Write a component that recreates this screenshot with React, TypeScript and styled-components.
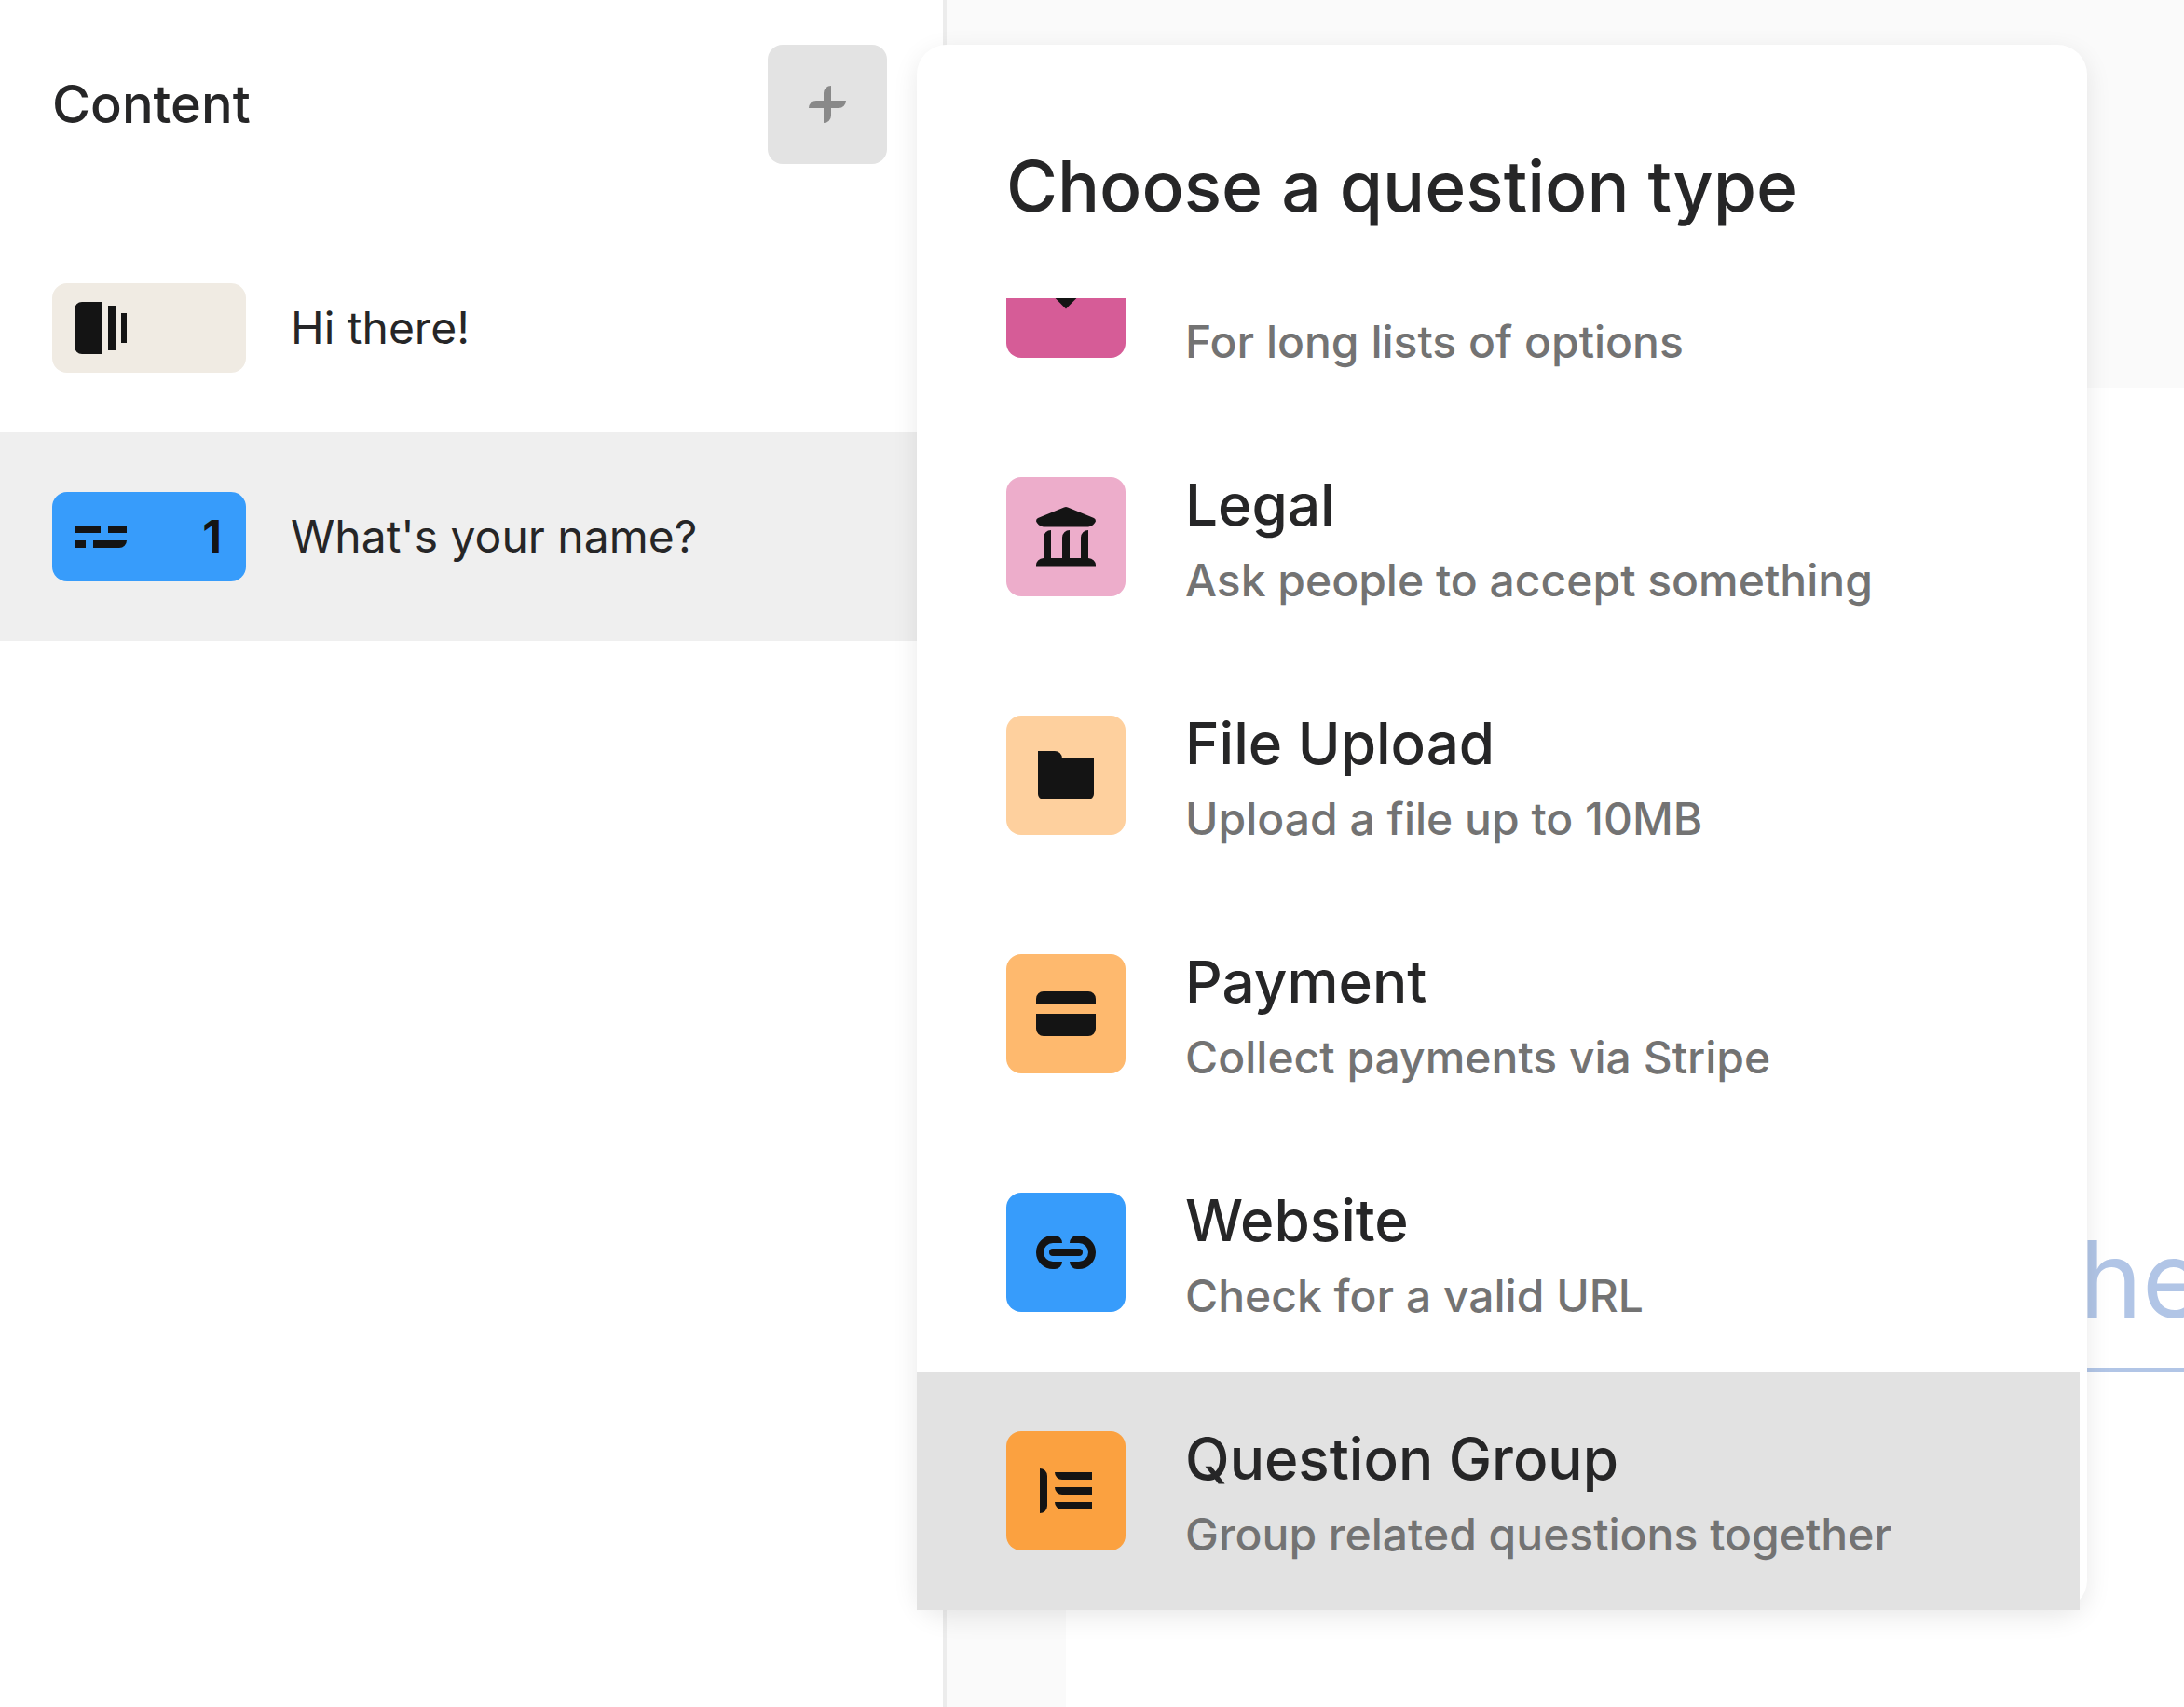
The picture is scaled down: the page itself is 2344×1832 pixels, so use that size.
import React, { useLayoutEffect, useRef } from "react";
import styled, { createGlobalStyle } from "styled-components";

const GlobalStyle = createGlobalStyle`
  *, *::before, *::after { box-sizing: border-box; }
  body {
    margin: 0;
    background: #ffffff;
    color: #262627;
    font-family: Inter, "Liberation Sans", sans-serif;
  }
  button, input { font: inherit; color: inherit; }
  h1, h2, p, ul { margin: 0; padding: 0; }
  ul { list-style: none; }
`;

const Page = styled.div`
  position: relative;
  display: flex;
  min-height: 100vh;
  overflow: hidden;
`;

const Sidebar = styled.aside`
  flex: none;
  width: 1016px;
  border-right: 4px solid #ececec;
  background: #ffffff;
`;

const SidebarHeader = styled.header`
  display: flex;
  align-items: center;
  justify-content: space-between;
  padding: 48px 60px 64px 56px;
`;

const SidebarTitle = styled.h2`
  font-size: 56px;
  line-height: 80px;
  font-weight: 500;
`;

const AddButton = styled.button`
  display: flex;
  align-items: center;
  justify-content: center;
  width: 128px;
  height: 128px;
  padding: 0;
  border: 0;
  border-radius: 16px;
  background: #e3e3e3;
  cursor: pointer;
`;

const Block = styled.button<{ $selected?: boolean }>`
  display: flex;
  align-items: center;
  gap: 48px;
  width: 100%;
  height: 224px;
  padding: 0 56px;
  border: 0;
  background: ${(p) => (p.$selected ? "#efefef" : "transparent")};
  text-align: left;
  font-size: 48px;
  line-height: 72px;
  cursor: pointer;
`;

const Chip = styled.span<{ $color: string }>`
  display: flex;
  align-items: center;
  justify-content: space-between;
  flex: none;
  width: 208px;
  height: 96px;
  padding: 0 26px 0 24px;
  border-radius: 16px;
  background: ${(p) => p.$color};
  color: #141414;
  font-weight: 700;
`;

const Workspace = styled.main`
  display: flex;
  flex: 1;
  min-width: 0;
  padding: 416px 0 0 128px;
  background: #fafafa;
`;

const Canvas = styled.section`
  flex: 1;
  min-width: 0;
  padding: 880px 0 0 92px;
  overflow: hidden;
  background: #ffffff;
`;

const AnswerInput = styled.input`
  display: block;
  width: 100%;
  height: 176px;
  padding: 0 0 20px 0;
  border: 0;
  border-bottom: 4px solid #b1c5e6;
  border-radius: 0;
  outline: 0;
  background: transparent;
  font-size: 114px;
  &::placeholder { color: #b1c5e6; opacity: 1; }
`;

const Menu = styled.div`
  position: absolute;
  top: 48px;
  left: 984px;
  width: 1256px;
  padding-top: 96px;
  border-radius: 32px;
  background: #ffffff;
  box-shadow: 0 8px 28px rgba(0, 0, 0, 0.09);
`;

const MenuTitle = styled.h1`
  padding: 0 96px 64px;
  font-size: 75px;
  line-height: 112px;
  font-weight: 500;
`;

const OptionList = styled.ul`
  height: 1408px;
  margin-right: 8px;
  overflow-y: auto;
  scrollbar-width: none;
`;

const Option = styled.button<{ $active?: boolean }>`
  display: flex;
  align-items: center;
  gap: 64px;
  width: 100%;
  height: 256px;
  padding: 0 96px;
  border: 0;
  background: ${(p) => (p.$active ? "#e2e2e2" : "transparent")};
  text-align: left;
  cursor: pointer;
`;

const Tile = styled.span<{ $color: string }>`
  display: flex;
  flex: none;
  align-items: center;
  justify-content: center;
  width: 128px;
  height: 128px;
  border-radius: 16px;
  background: ${(p) => p.$color};
`;

const OptionText = styled.span`
  display: flex;
  flex-direction: column;
  padding-top: 4px;
`;

const OptionName = styled.span<{ $scrolledPast?: boolean }>`
  visibility: ${(p) => (p.$scrolledPast ? "hidden" : "visible")};
  font-size: 62px;
  line-height: 90px;
  font-weight: 500;
`;

const OptionHint = styled.span`
  color: #737373;
  font-size: 48px;
  line-height: 72px;
  font-weight: 500;
`;

const Glyph = styled.svg`
  display: block;
  flex: none;
  fill: #141414;
`;

const PlusIcon = () => (
  <Glyph width="40" height="40" viewBox="0 0 20 20" aria-hidden="true">
    <path
      fill="#898989"
      d="M8 4a4 4 0 0 1 4-4v8h8a4 4 0 0 1-4 4h-4v4a4 4 0 0 1-4 4v-8H0a4 4 0 0 1 4-4h4z"
    />
  </Glyph>
);

const WelcomeIcon = () => (
  <Glyph width="56" height="56" viewBox="0 0 28 28" aria-hidden="true">
    <path d="M4 0h11v28H4a4 4 0 0 1-4-4V4a4 4 0 0 1 4-4zM18 2h4v24h-4zM25 6h3v16h-3z" />
  </Glyph>
);

const ShortTextIcon = () => (
  <Glyph width="56" height="24" viewBox="0 0 28 12" aria-hidden="true">
    <path d="M0 0h14v4H0zM18 0h10v4H18zM0 8h6v4H0zM10 8h18a4 4 0 0 1-4 4H10z" />
  </Glyph>
);

const TileGlyph = ({ d }: { d: string }) => (
  <Glyph width="64" height="64" viewBox="0 0 32 32" aria-hidden="true">
    <path d={d} />
  </Glyph>
);

const icons = {
  dropdown: "M5.300 11h21.400L16 21.700z",
  legal:
    "M15 .2a3 3 0 0 1 2 0L31 6q1 .5 1 1.600q-.8 2.400-4 3.200H4Q.8 10 0 7.600q0-1.100 1-1.600zM4 16.500a4 4 0 0 1 4-4v15h6v-11a4 4 0 0 1 4-4v15h6v-11a4 4 0 0 1 4-4v15a4 4 0 0 1 4 4.300H0a4 4 0 0 1 4-4.300z",
  folder: "M1 3h9a4 4 0 0 1 4 4h17v19a3 3 0 0 1-3 3H4a3 3 0 0 1-3-3z",
  card: "M4 4h24a4 4 0 0 1 4 4v3H0V8a4 4 0 0 1 4-4zM0 16h32v8a4 4 0 0 1-4 4H4a4 4 0 0 1-4-4z",
  link: "M9 7a9 9 0 0 0 0 18h1a4 4 0 0 0 4-4H9a5 5 0 0 1 0-10h5a4 4 0 0 0-4-4zM23 7a9 9 0 0 1 0 18h-1a4 4 0 0 1-4-4h5a5 5 0 0 0 0-10h-5a4 4 0 0 1 4-4zM9 14h14a2 2 0 0 1 0 4H9a2 2 0 0 1 0-4z",
  group:
    "M2 4a4 4 0 0 1 4 4v16a4 4 0 0 1-4 4zM10 6h20v4H14a4 4 0 0 1-4-4zM10 14h20v4H14a4 4 0 0 1-4-4zM10 22h20v4H14a4 4 0 0 1-4-4z",
};

const options = [
  { name: "Dropdown", hint: "For long lists of options", color: "#d65c97", icon: icons.dropdown, scrolledPast: true },
  { name: "Legal", hint: "Ask people to accept something", color: "#edadcb", icon: icons.legal },
  { name: "File Upload", hint: "Upload a file up to 10MB", color: "#fed09e", icon: icons.folder },
  { name: "Payment", hint: "Collect payments via Stripe", color: "#feb96e", icon: icons.card },
  { name: "Website", hint: "Check for a valid URL", color: "#379cfb", icon: icons.link },
  { name: "Question Group", hint: "Group related questions together", color: "#fba140", icon: icons.group, active: true },
];

export default function App() {
  const listRef = useRef<HTMLUListElement>(null);

  useLayoutEffect(() => {
    const list = listRef.current;
    if (list) list.scrollTop = list.scrollHeight;
  }, []);

  return (
    <>
      <GlobalStyle />
      <Page>
        <Sidebar>
          <SidebarHeader>
            <SidebarTitle>Content</SidebarTitle>
            <AddButton type="button" aria-label="Add question">
              <PlusIcon />
            </AddButton>
          </SidebarHeader>
          <Block type="button">
            <Chip $color="#f0ebe3">
              <WelcomeIcon />
            </Chip>
            Hi there!
          </Block>
          <Block type="button" $selected>
            <Chip $color="#379cfb">
              <ShortTextIcon />
              <span>1</span>
            </Chip>
            What's your name?
          </Block>
        </Sidebar>
        <Workspace>
          <Canvas>
            <AnswerInput aria-label="Answer" placeholder="Type your answer here..." />
          </Canvas>
        </Workspace>
        <Menu role="dialog" aria-labelledby="menu-title">
          <MenuTitle id="menu-title">Choose a question type</MenuTitle>
          <OptionList ref={listRef}>
            {options.map((o) => (
              <li key={o.name}>
                <Option type="button" $active={o.active}>
                  <Tile $color={o.color}>
                    <TileGlyph d={o.icon} />
                  </Tile>
                  <OptionText>
                    <OptionName $scrolledPast={o.scrolledPast}>{o.name}</OptionName>
                    <OptionHint>{o.hint}</OptionHint>
                  </OptionText>
                </Option>
              </li>
            ))}
          </OptionList>
        </Menu>
      </Page>
    </>
  );
}
